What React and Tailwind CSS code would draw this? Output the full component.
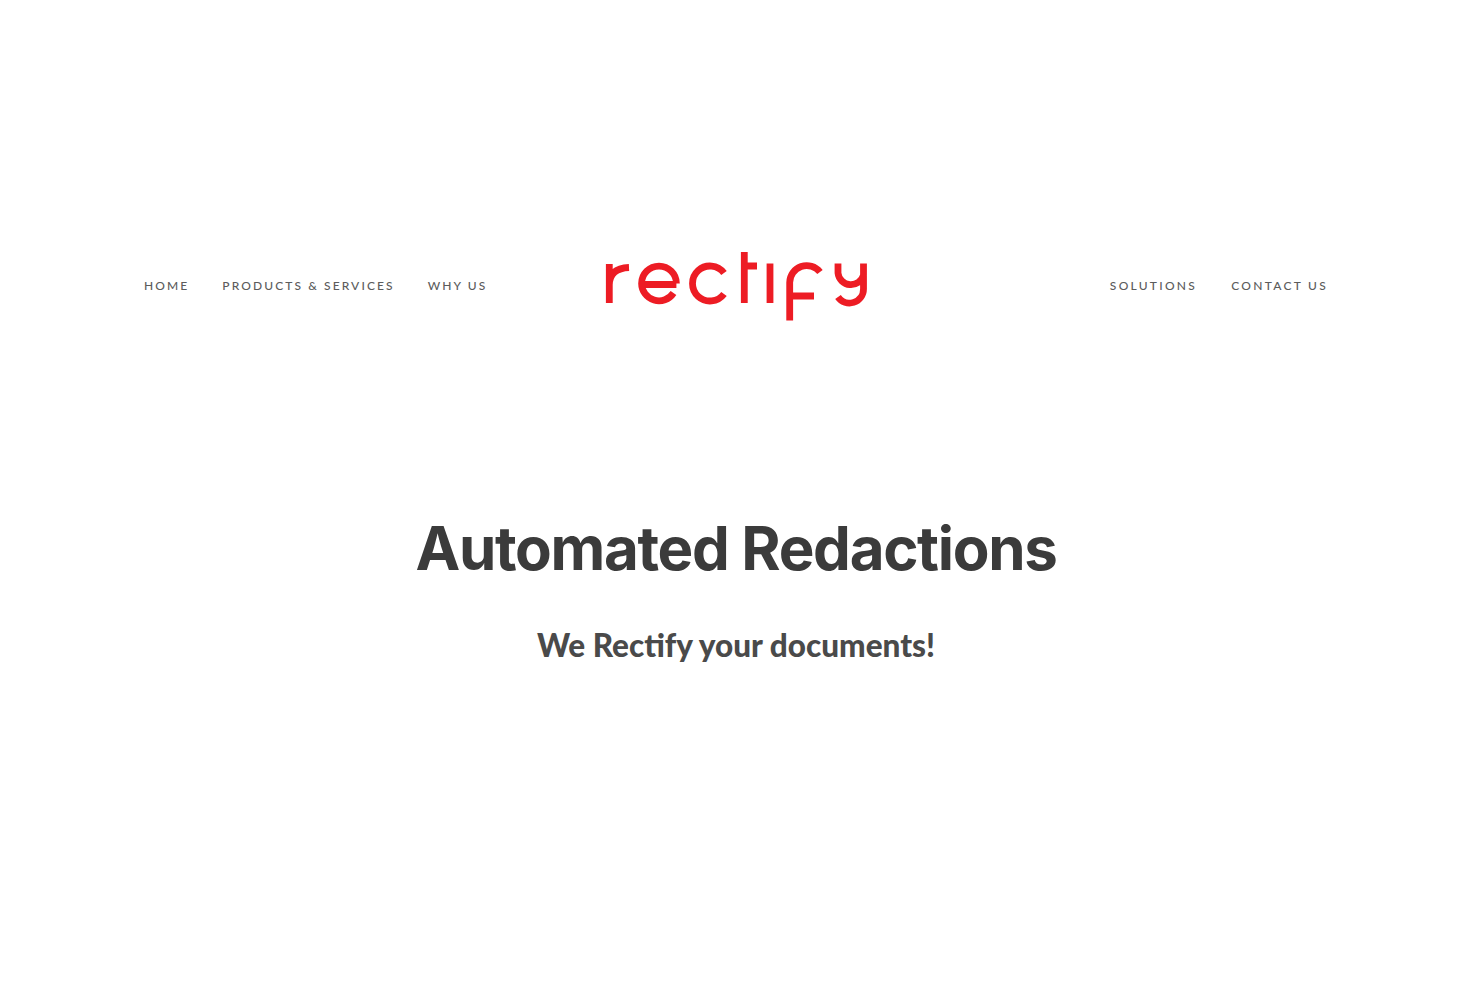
import React from 'react';

const Logo = () => (
  <svg width="280" height="80" viewBox="596 246 280 80" fill="none" stroke="#ed1c24" strokeWidth="6.8" className="block">
    {/* r */}
    <path d="M609.3 303V264M609.3 285C609.3 273 617 268 629 267.5" />
    {/* e */}
    <path d="M641.6 284.5H676.4M641.6 283.5A17.4 17.4 0 0 1 676.4 283.5M641.6 283.5A17.4 17.4 0 0 0 673.5 293" />
    {/* c */}
    <path d="M724 273A17.5 17.5 0 1 0 724 294" />
    {/* t */}
    <path d="M744.3 252V303M744.3 266H757" />
    {/* i */}
    <path d="M770 263.5V303" />
    {/* f */}
    <path d="M789.7 320.5V282.5A17 17 0 0 1 820 272M789.7 296H814" />
    {/* y */}
    <path d="M838 263.5V273A13 13 0 0 0 863.5 275V263.5M863.5 275V289A14 14 0 0 1 838 297" />
  </svg>
);

const navClass = "text-[12px] leading-none font-medium tracking-[0.175em] text-[#5c5c5c] whitespace-nowrap";
const navRightClass = "text-[12px] leading-none font-medium tracking-[0.19em] text-[#5c5c5c] whitespace-nowrap";

export default function App() {
  return (
    <div className="min-h-[987px] w-[1472px] bg-white font-['Lato',sans-serif]">
      <header className="grid grid-cols-[1fr_auto_1fr] items-center pt-[246px] px-[144px]">
        <nav className="flex gap-[33px]">
          <a className={navClass}>HOME</a>
          <a className={navClass}>PRODUCTS &amp; SERVICES</a>
          <a className={navClass}>WHY US</a>
        </nav>
        <Logo />
        <nav className="flex justify-end gap-[34px]">
          <a className={navRightClass}>SOLUTIONS</a>
          <a className={navRightClass}>CONTACT US</a>
        </nav>
      </header>
      <main className="pt-[186px] text-center">
        <h1 className="font-['Inter',sans-serif] text-[60px] leading-[72px] font-bold tracking-[-0.022em] text-[#3b3b3b]">Automated Redactions</h1>
        <h2 className="mt-[41px] text-[31.5px] leading-[40px] font-black text-[#4a4a4a]">We Rectify your documents!</h2>
      </main>
    </div>
  );
}
